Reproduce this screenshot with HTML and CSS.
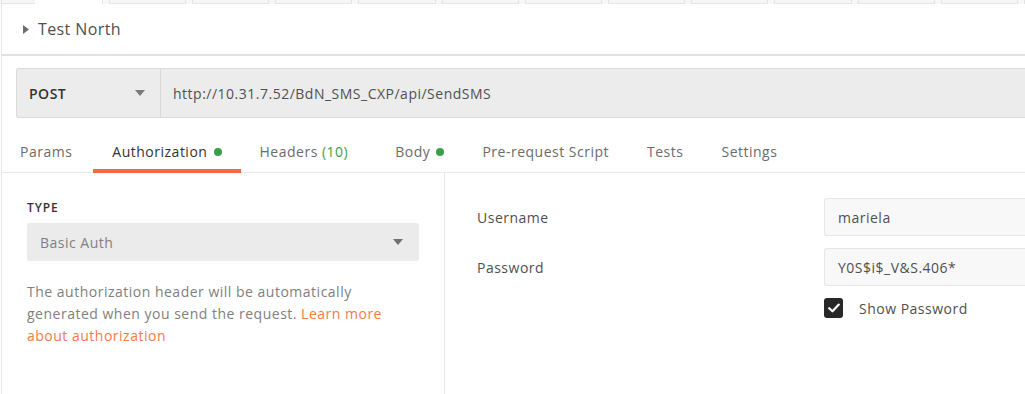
FILE: index.html
```html
<!DOCTYPE html>
<html>
<head>
<meta charset="utf-8">
<link rel="stylesheet" href="styles.css">
</head>
<body>
<div class="app">
  <div class="tabstrip">
    <div class="ts-lead"></div>
    <div class="ts-active"></div>
    <div class="ts-tab"></div><div class="ts-tab"></div><div class="ts-tab"></div><div class="ts-tab"></div>
    <div class="ts-tab"></div><div class="ts-tab"></div><div class="ts-tab"></div><div class="ts-tab"></div>
    <div class="ts-tab"></div><div class="ts-tab"></div><div class="ts-tab"></div><div class="ts-rest"></div>
  </div>
  <div class="main">
    <div class="header">
      <svg class="tri-right" width="6" height="9" viewBox="0 0 6 9"><path d="M0 0 L6 4.5 L0 9 Z" fill="#6e6e6e"/></svg>
      <span class="title">Test North</span>
    </div>
    <div class="reqbar">
      <div class="method">
        <span>POST</span>
        <svg class="caret" width="10" height="6" viewBox="0 0 10 6"><path d="M0 0 H10 L5 6 Z" fill="#7a7a7a"/></svg>
      </div>
      <div class="url">http://10.31.7.52/BdN_SMS_CXP/api/SendSMS</div>
    </div>
    <div class="tabs">
      <div class="tab t-params">Params</div>
      <div class="tab active">Authorization <span class="dot"></span></div>
      <div class="tab">Headers <span class="count">(10)</span></div>
      <div class="tab t-body">Body <span class="dot"></span></div>
      <div class="tab">Pre-request Script</div>
      <div class="tab">Tests</div>
      <div class="tab">Settings</div>
    </div>
    <div class="auth">
      <div class="auth-left">
        <div class="type-label">TYPE</div>
        <div class="select">
          <span>Basic Auth</span>
          <svg class="caret" width="10" height="6" viewBox="0 0 10 6"><path d="M0 0 H10 L5 6 Z" fill="#707070"/></svg>
        </div>
        <p class="desc">The authorization header will be automatically generated when you send the request. <span class="link">Learn more about authorization</span></p>
      </div>
      <div class="auth-right">
        <div class="field">
          <div class="label">Username</div>
          <div class="input">mariela</div>
        </div>
        <div class="field">
          <div class="label">Password</div>
          <div class="input">Y0S$i$_V&amp;S.406*</div>
        </div>
        <div class="check-row">
          <span class="checkbox"><svg width="12" height="10" viewBox="0 0 12 10"><path d="M1.2 5.2 L4.5 8.3 L10.8 1.6" fill="none" stroke="#fff" stroke-width="2.2" stroke-linecap="round" stroke-linejoin="round"/></svg></span>
          <span class="check-label">Show Password</span>
        </div>
      </div>
    </div>
  </div>
</div>
</body>
</html>
```

FILE: styles.css
```css
* { box-sizing: border-box; }
html, body { margin: 0; padding: 0; background: #fff; }
body {
  font-family: "Open Sans", "Liberation Sans", sans-serif;
  font-size: 14px;
  letter-spacing: 0.5px;
  color: #505050;
  width: 1025px;
  height: 394px;
  overflow: hidden;
}
.app { width: 1025px; height: 394px; }

.tabstrip {
  display: flex;
  height: 4px;
  background: #f6f6f6;
}
.ts-lead { width: 35px; border-bottom: 1px solid #e6e6e6; border-left: 1px solid #e6e6e6; margin-left: 1px; }
.ts-active { width: 69px; background: #fff; border-right: 1px solid #e4e4e4; }
.ts-tab {
  width: 79px;
  margin-left: 6px;
  border-left: 1px solid #e4e4e4;
  border-right: 1px solid #e4e4e4;
  border-bottom: 1px solid #e6e6e6;
}
.ts-rest { flex: 1; margin-left: 6px; border-left: 1px solid #e4e4e4; border-bottom: 1px solid #e6e6e6; }

.main {
  margin-left: 1px;
  border-left: 1px solid #e6e6e6;
  height: 390px;
}

.header {
  height: 52px;
  display: flex;
  align-items: center;
  padding-left: 21px;
  border-bottom: 2px solid #e2e2e2;
}
.tri-right { margin-right: 9px; margin-top: 1px; }
.title { font-size: 16px; color: #505050; letter-spacing: 0.4px; }

.reqbar {
  margin: 12px 0 0 14px;
  height: 50px;
  display: flex;
  background: #ececec;
  border: 1px solid #dadada;
  border-right: none;
  border-radius: 3px 0 0 3px;
}
.method {
  width: 144px;
  border-right: 1px solid #d8d8d8;
  display: flex;
  align-items: center;
  justify-content: space-between;
  padding: 0 15px 0 12px;
  font-weight: 600;
  color: #333;
}
.url {
  display: flex;
  align-items: center;
  padding-left: 12px;
  color: #505050;
}

.tabs {
  display: flex;
  height: 55px;
  border-bottom: 1px solid #e8e8e8;
  align-items: stretch;
}
.tab {
  padding: 16px 19px 0 19px;
  display: flex;
  align-items: center;
  color: #6b6b6b;
  border-bottom: 4px solid transparent;
  margin-bottom: -1px;
  white-space: pre;
}
.tab.t-params { padding-left: 18px; padding-right: 21px; }
.tab.active { color: #333; border-bottom-color: #f26b3a; }
.tab.t-body { margin-left: 9px; }
.dot {
  display: inline-block;
  width: 8px;
  height: 8px;
  border-radius: 50%;
  background: #3a9f48;
  margin-left: 2px;
}
.count { color: #3a9f48; }

.auth { display: flex; height: 221px; }
.auth-left {
  width: 443px;
  border-right: 1px solid #e6e6e6;
  padding: 28px 25px 0 25px;
}
.type-label {
  font-size: 12px;
  font-weight: 600;
  color: #333;
  line-height: 14px;
  letter-spacing: 0.9px;
}
.select {
  margin-top: 8px;
  height: 38px;
  background: #ebebeb;
  border-radius: 3px;
  display: flex;
  align-items: center;
  justify-content: space-between;
  padding: 0 16px 0 13px;
  color: #808080;
}
.desc {
  margin: 20px 0 0 0;
  line-height: 22px;
  color: #808080;
}
.link { color: #f47a48; }

.auth-right {
  flex: 1;
  padding: 25px 0 0 32px;
}
.field {
  display: flex;
  align-items: center;
  margin-bottom: 12px;
}
.label { width: 347px; color: #505050; }
.input {
  flex: 1;
  height: 38px;
  background: #f8f8f8;
  border: 1px solid #e6e6e6;
  border-right: none;
  border-radius: 3px 0 0 3px;
  display: flex;
  align-items: center;
  padding-left: 13px;
  color: #505050;
}
.check-row {
  display: flex;
  align-items: center;
  margin-left: 347px;
}
.checkbox {
  width: 19px;
  height: 20px;
  background: #282828;
  border-radius: 3px;
  display: flex;
  align-items: center;
  justify-content: center;
}
.check-label { margin-left: 16px; color: #505050; }
```
